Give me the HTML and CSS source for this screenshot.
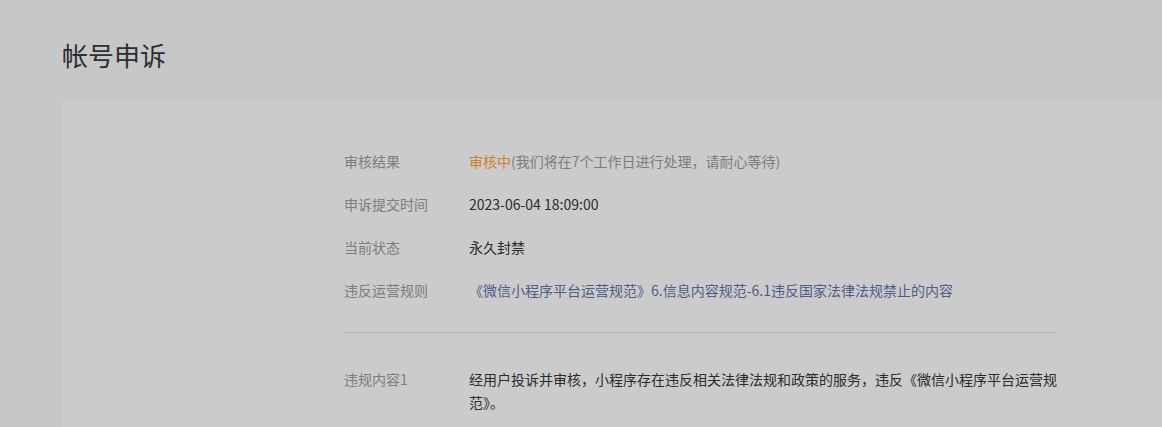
FILE: index.html
```html
<!DOCTYPE html>
<html lang="zh-CN">
<head>
<meta charset="utf-8">
<title>帐号申诉</title>
<link rel="stylesheet" href="styles.css">
</head>
<body>
<div class="page">
  <h1 class="title">帐号申诉</h1>
  <div class="card">
    <div class="info">
      <div class="row">
        <div class="label">审核结果</div>
        <div class="value"><span class="status">审核中</span><span class="hint">(我们将在7个工作日进行处理，请耐心等待)</span></div>
      </div>
      <div class="row">
        <div class="label">申诉提交时间</div>
        <div class="value">2023-06-04 18:09:00</div>
      </div>
      <div class="row">
        <div class="label">当前状态</div>
        <div class="value">永久封禁</div>
      </div>
      <div class="row">
        <div class="label">违反运营规则</div>
        <div class="value"><a class="link" href="#">《微信小程序平台运营规范》6.信息内容规范-6.1违反国家法律法规禁止的内容</a></div>
      </div>
      <div class="divider"></div>
      <div class="row row-multi">
        <div class="label">违规内容1</div>
        <div class="value">经用户投诉并审核，小程序存在违反相关法律法规和政策的服务，违反《微信小程序平台运营规范》。</div>
      </div>
    </div>
  </div>
</div>
</body>
</html>
```

FILE: styles.css
```css
html, body {
  margin: 0;
  padding: 0;
}
body {
  background: #c6c7c9;
  font-family: "Noto Sans CJK SC", "Noto Sans", sans-serif;
  color: #2b2b2b;
  overflow: hidden;
}
.page {
  padding-left: 61px;
}
.title {
  margin: 0;
  padding: 35px 0 0 1px;
  height: 100px;
  box-sizing: border-box;
  font-size: 26px;
  line-height: 40px;
  font-weight: 400;
  color: #2e2e2e;
}
.card {
  background: #cbcbcb;
  border-radius: 3px 0 0 0;
  height: 327px;
  padding: 40px 0 0 283px;
  box-sizing: border-box;
}
.info {
  width: 714px;
}
.row {
  display: flex;
  font-size: 14px;
  line-height: 43px;
}
.label {
  width: 125px;
  flex-shrink: 0;
  color: #7d7d7d;
}
.value {
  flex: 1;
  color: #2b2b2b;
}
.status {
  color: #d1802b;
}
.hint {
  color: #7d7d7d;
}
.link {
  color: #4d5e88;
  text-decoration: none;
}
.divider {
  height: 1px;
  background: #b9b9b9;
  margin: 20px 0 35px;
}
.row-multi {
  line-height: 23px;
}
```
